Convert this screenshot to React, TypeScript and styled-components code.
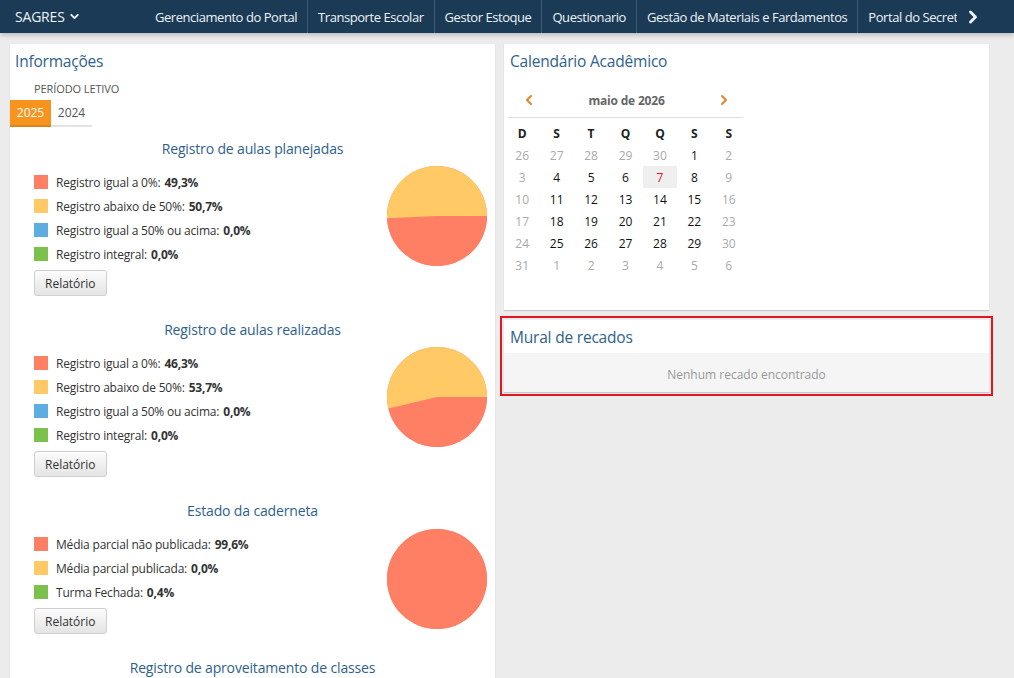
import React from 'react';
import styled, { createGlobalStyle } from 'styled-components';
import { ChevronDown, ChevronRight, ChevronLeft } from 'lucide-react';

const GlobalStyle = createGlobalStyle`
  html, body {
    margin: 0;
    padding: 0;
    background: #ececec;
    overflow: hidden;
  }
  body {
    font-family: 'Open Sans', 'Noto Sans', Arial, sans-serif;
    color: #333;
  }
  * {
    box-sizing: border-box;
  }
`;

const COLORS = {
  red: '#ff7f65',
  yellow: '#ffc966',
  blue: '#5dade2',
  green: '#7bc14b',
};

const TopBar = styled.header`
  height: 33px;
  background: #1b3a55;
  display: flex;
  align-items: stretch;
  box-shadow: 0 2px 5px rgba(0, 0, 0, 0.22);
  color: #eef3f7;
  font-size: 13px;
`;

const Brand = styled.div`
  width: 145px;
  display: flex;
  align-items: center;
  gap: 3px;
  padding-left: 15px;
  font-size: 14px;
  letter-spacing: -0.2px;
`;

const Menu = styled.nav`
  display: flex;
  width: 812px;
  overflow: hidden;
`;

const MenuItem = styled.a`
  display: flex;
  align-items: center;
  padding: 0 10px;
  white-space: nowrap;
  color: inherit;
  text-decoration: none;
  letter-spacing: -0.45px;
  border-left: 1px solid #3e5b74;

  &:first-child {
    border-left: none;
  }
`;

const MenuArrow = styled.div`
  display: flex;
  align-items: center;
  padding-left: 6px;
`;

const Page = styled.main`
  display: grid;
  grid-template-columns: 485px 485px;
  column-gap: 9px;
  padding: 11px 0 0 10px;
  align-items: start;
`;

const Panel = styled.section`
  background: #fff;
  box-shadow: 0 1px 1px rgba(0, 0, 0, 0.15);
`;

const PanelTitle = styled.h2`
  margin: 0;
  padding: 6px 5px 0 6px;
  height: 28px;
  font-size: 15.5px;
  font-weight: 400;
  line-height: 22px;
  color: #2f5f8c;
  letter-spacing: -0.2px;
`;

const InfoTitle = styled(PanelTitle)`
  padding-left: 5px;
`;

const PeriodLabel = styled.div`
  margin: 10px 0 0 24px;
  font-size: 11px;
  line-height: 14px;
  color: #555;
  letter-spacing: -0.1px;
`;

const Tabs = styled.div`
  display: flex;
  margin-top: 4px;
`;

const Tab = styled.div<{ $active?: boolean }>`
  height: 27px;
  padding: 0 6px;
  display: flex;
  align-items: center;
  font-size: 12px;
  color: ${p => (p.$active ? '#fff' : '#555')};
  background: ${p => (p.$active ? '#f7941d' : 'transparent')};
  border-bottom: 2px solid ${p => (p.$active ? '#e0831a' : '#e3e3e3')};
  min-width: 41px;
  justify-content: center;
`;

const Sections = styled.div`
  padding-top: 12px;
  padding-bottom: 20px;
`;

const ChartBlock = styled.div`
  margin-bottom: 24px;
`;

const ChartTitle = styled.h3`
  margin: 0;
  text-align: center;
  font-size: 14px;
  font-weight: 400;
  line-height: 20px;
  color: #2f5f8c;
  letter-spacing: -0.15px;
`;

const ChartBody = styled.div`
  display: flex;
  justify-content: space-between;
  align-items: flex-start;
  margin-top: 11px;
  padding: 0 8px 0 24px;
`;

const Legend = styled.ul`
  list-style: none;
  margin: 0;
  padding: 0;
`;

const LegendItem = styled.li`
  display: flex;
  align-items: center;
  height: 24px;
  font-size: 12px;
  color: #333;
  letter-spacing: -0.2px;

  b {
    margin-left: 4px;
  }
`;

const Swatch = styled.span<{ $color: string }>`
  width: 14px;
  height: 14px;
  margin-right: 8px;
  background: ${p => p.$color};
`;

const ReportButton = styled.button`
  margin-top: 4px;
  height: 26px;
  padding: 0 10px;
  font-family: inherit;
  font-size: 12px;
  color: #333;
  background: linear-gradient(#fcfcfc, #e4e4e4);
  border: 1px solid #cfcfcf;
  border-radius: 3px;
`;

const PieWrap = styled.div<{ $offset: number }>`
  width: 100px;
  height: 100px;
  margin-top: ${p => p.$offset}px;
`;

const RightColumn = styled.div`
  display: flex;
  flex-direction: column;
  gap: 10px;
`;

const CalendarPanel = styled(Panel)`
  padding-bottom: 34px;
`;

const Calendar = styled.div`
  width: 241px;
  margin-left: 1px;
`;

const CalendarNav = styled.div`
  display: flex;
  align-items: center;
  justify-content: space-between;
  height: 33px;
  margin: 13px 3px 0;
  padding: 0 11px 2px 13px;
  border-bottom: 1px solid #ddd;
  color: #e8822b;
`;

const MonthLabel = styled.span`
  font-size: 12px;
  font-weight: 700;
  color: #666;
  letter-spacing: -0.2px;
`;

const DayGrid = styled.div`
  display: grid;
  grid-template-columns: repeat(7, 1fr);
  grid-auto-rows: 22px;
  margin-top: 4px;
`;

const WeekDay = styled.div`
  display: flex;
  align-items: center;
  justify-content: center;
  font-size: 12px;
  font-weight: 700;
  color: #222;
`;

const Day = styled.div<{ $muted?: boolean; $today?: boolean }>`
  display: flex;
  align-items: center;
  justify-content: center;
  font-size: 12px;
  color: ${p => (p.$today ? '#e0141e' : p.$muted ? '#aaa' : '#111')};
  background: ${p => (p.$today ? '#efefef' : 'transparent')};
`;

const MuralPanel = styled(Panel)`
  outline: 2px solid #e3161f;
  outline-offset: 2px;
`;

const MuralTitle = styled(PanelTitle)`
  height: 33px;
  padding-top: 6px;
`;

const EmptyNote = styled.div`
  background: #f5f5f5;
  padding: 14px 0 9px;
  font-size: 12px;
  line-height: 16px;
  text-align: center;
  color: #999;
`;

type Slice = { label: string; value: number; color: string };

type ChartData = {
  title: string;
  slices: Slice[];
  offset: number;
};

const charts: ChartData[] = [
  {
    title: 'Registro de aulas planejadas',
    offset: -4,
    slices: [
      { label: 'Registro igual a 0%:', value: 49.3, color: COLORS.red },
      { label: 'Registro abaixo de 50%:', value: 50.7, color: COLORS.yellow },
      { label: 'Registro igual a 50% ou acima:', value: 0, color: COLORS.blue },
      { label: 'Registro integral:', value: 0, color: COLORS.green },
    ],
  },
  {
    title: 'Registro de aulas realizadas',
    offset: -4,
    slices: [
      { label: 'Registro igual a 0%:', value: 46.3, color: COLORS.red },
      { label: 'Registro abaixo de 50%:', value: 53.7, color: COLORS.yellow },
      { label: 'Registro igual a 50% ou acima:', value: 0, color: COLORS.blue },
      { label: 'Registro integral:', value: 0, color: COLORS.green },
    ],
  },
  {
    title: 'Estado da caderneta',
    offset: -3,
    slices: [
      { label: 'Média parcial não publicada:', value: 99.6, color: COLORS.red },
      { label: 'Média parcial publicada:', value: 0, color: COLORS.yellow },
      { label: 'Turma Fechada:', value: 0.4, color: COLORS.green },
    ],
  },
  {
    title: 'Registro de aproveitamento de classes',
    offset: -4,
    slices: [
      { label: 'Aproveitamento igual a 0%:', value: 100, color: COLORS.red },
      { label: 'Aproveitamento abaixo de 50%:', value: 0, color: COLORS.yellow },
    ],
  },
];

const fmt = (v: number) => v.toFixed(1).replace('.', ',') + '%';

// slices start at 3 o'clock and run clockwise; slivers under 1% are not drawn
const Pie: React.FC<{ slices: Slice[] }> = ({ slices }) => {
  const r = 50;
  const total = slices.reduce((s, x) => s + x.value, 0) || 1;
  let angle = 0;
  return (
    <svg width="100" height="100" viewBox="-50 -50 100 100">
      <circle r={r} fill={slices[0].color} />
      {slices
        .filter(s => s.value >= 1)
        .map(s => {
          const sweep = (s.value / total) * Math.PI * 2;
          const a0 = angle;
          const a1 = angle + sweep;
          angle = a1;
          if (sweep >= Math.PI * 2 * 0.99) {
            return <circle key={s.label} r={r} fill={s.color} />;
          }
          const large = sweep > Math.PI ? 1 : 0;
          const d = `M0 0 L${r * Math.cos(a0)} ${r * Math.sin(a0)} A${r} ${r} 0 ${large} 1 ${r * Math.cos(a1)} ${r * Math.sin(a1)} Z`;
          return <path key={s.label} d={d} fill={s.color} />;
        })}
    </svg>
  );
};

const menu = [
  'Gerenciamento do Portal',
  'Transporte Escolar',
  'Gestor Estoque',
  'Questionario',
  'Gestão de Materiais e Fardamentos',
  'Portal do Secretário',
];

const weekDays = ['D', 'S', 'T', 'Q', 'Q', 'S', 'S'];

type CalDay = { n: number; other: boolean };

const buildMonth = (): CalDay[] => {
  const days: CalDay[] = [];
  for (let n = 26; n <= 30; n++) days.push({ n, other: true });
  for (let n = 1; n <= 31; n++) days.push({ n, other: false });
  for (let n = 1; n <= 6; n++) days.push({ n, other: true });
  return days;
};

export default function App() {
  const days = buildMonth();

  return (
    <>
      <GlobalStyle />
      <TopBar>
        <Brand>
          SAGRES <ChevronDown size={13} strokeWidth={3.5} />
        </Brand>
        <Menu>
          {menu.map(m => (
            <MenuItem key={m}>{m}</MenuItem>
          ))}
        </Menu>
        <MenuArrow>
          <ChevronRight size={20} strokeWidth={3.5} />
        </MenuArrow>
      </TopBar>

      <Page>
        <Panel>
          <InfoTitle>Informações</InfoTitle>
          <PeriodLabel>PERÍODO LETIVO</PeriodLabel>
          <Tabs>
            <Tab $active>2025</Tab>
            <Tab>2024</Tab>
          </Tabs>
          <Sections>
            {charts.map(c => (
              <ChartBlock key={c.title}>
                <ChartTitle>{c.title}</ChartTitle>
                <ChartBody>
                  <div>
                    <Legend>
                      {c.slices.map(s => (
                        <LegendItem key={s.label}>
                          <Swatch $color={s.color} />
                          {s.label}
                          <b>{fmt(s.value)}</b>
                        </LegendItem>
                      ))}
                    </Legend>
                    <ReportButton>Relatório</ReportButton>
                  </div>
                  <PieWrap $offset={c.offset}>
                    <Pie slices={c.slices} />
                  </PieWrap>
                </ChartBody>
              </ChartBlock>
            ))}
          </Sections>
        </Panel>

        <RightColumn>
          <CalendarPanel>
            <PanelTitle>Calendário Acadêmico</PanelTitle>
            <Calendar>
              <CalendarNav>
                <ChevronLeft size={16} strokeWidth={3} />
                <MonthLabel>maio de 2026</MonthLabel>
                <ChevronRight size={16} strokeWidth={3} />
              </CalendarNav>
              <DayGrid>
                {weekDays.map((w, i) => (
                  <WeekDay key={i}>{w}</WeekDay>
                ))}
                {days.map((d, i) => {
                  const col = i % 7;
                  const weekend = col === 0 || col === 6;
                  return (
                    <Day
                      key={i}
                      $muted={d.other || weekend}
                      $today={!d.other && d.n === 7}
                    >
                      {d.n}
                    </Day>
                  );
                })}
              </DayGrid>
            </Calendar>
          </CalendarPanel>

          <MuralPanel>
            <MuralTitle>Mural de recados</MuralTitle>
            <EmptyNote>Nenhum recado encontrado</EmptyNote>
          </MuralPanel>
        </RightColumn>
      </Page>
    </>
  );
}
